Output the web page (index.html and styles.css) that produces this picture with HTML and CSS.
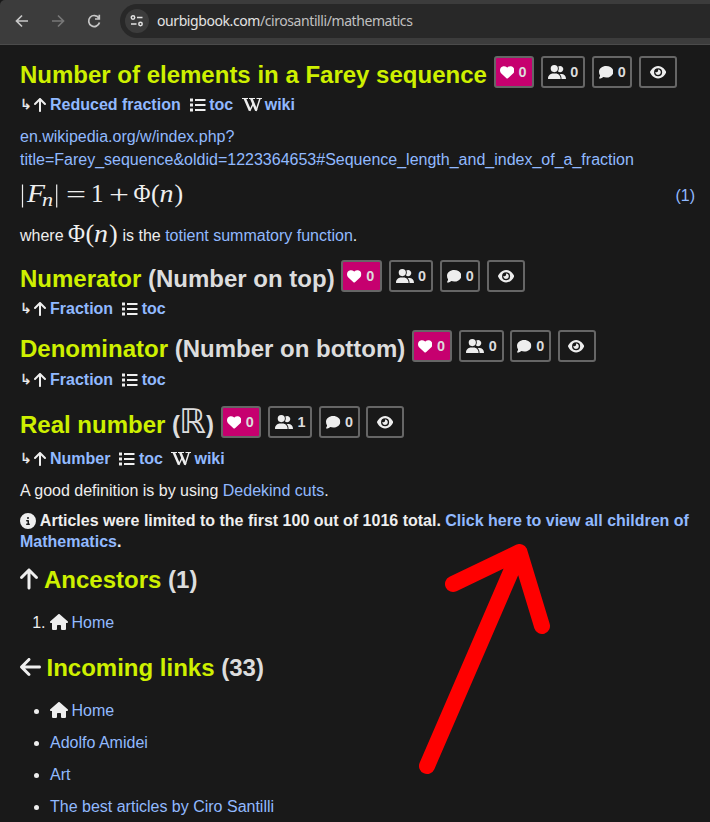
FILE: index.html
```html
<!DOCTYPE html>
<html lang="en">
<head>
<meta charset="utf-8">
<title>Mathematics</title>
<link rel="stylesheet" href="styles.css">
</head>
<body>
<svg class="defs" width="0" height="0">
  <symbol id="heart" viewBox="0 0 512 512"><path d="M47.6 300.4L228.3 469.1c7.5 7 17.4 10.9 27.7 10.9s20.2-3.9 27.7-10.9L464.4 300.4c30.4-28.3 47.6-68 47.6-109.5v-5.8c0-69.9-50.5-129.5-119.4-141C347 36.5 300.6 51.4 268 84L256 96 244 84c-32.6-32.6-79-47.5-124.6-39.9C50.5 55.6 0 115.2 0 185.1v5.8c0 41.5 17.2 81.2 47.6 109.5z"/></symbol>
  <symbol id="users" viewBox="0 0 640 512"><path d="M96 128a128 128 0 1 1 256 0A128 128 0 1 1 96 128zM0 482.3C0 383.8 79.8 304 178.3 304h91.4C368.2 304 448 383.8 448 482.3c0 16.4-13.3 29.7-29.7 29.7H29.7C13.3 512 0 498.7 0 482.3zM609.3 512H471.4c5.4-9.4 8.6-20.3 8.6-32v-8c0-60.7-27.1-115.2-69.8-151.8c2.4-.1 4.7-.2 7.1-.2h61.4C567.8 320 640 392.2 640 481.3c0 17-13.8 30.7-30.7 30.7zM432 256c-31 0-59-12.6-79.3-32.9C372.4 196.5 384 163.6 384 128c0-26.8-6.6-52.1-18.3-74.3C384.3 40.1 407.2 32 432 32c61.9 0 112 50.1 112 112s-50.1 112-112 112z"/></symbol>
  <symbol id="comment" viewBox="0 0 512 512"><path d="M512 240c0 114.9-114.6 208-256 208c-37.1 0-72.3-6.4-104.1-17.9c-11.9 8.7-31.3 20.6-54.3 30.6C73.6 471.1 44.7 480 16 480c-6.500 0-12.300-3.900-14.800-9.900c-2.500-6-1.100-12.800 3.400-17.400C20 435 34 408 38 374C14 337 0 290 0 240C0 125.100 114.600 32 256 32s256 93.100 256 208z"/></symbol>
  <symbol id="eye" viewBox="0 0 576 512"><path d="M288 32c-80.8 0-145.5 36.8-192.6 80.6C48.6 156 17.3 208 2.5 243.7c-3.3 7.9-3.3 16.7 0 24.6C17.3 304 48.6 356 95.4 399.4C142.5 443.2 207.2 480 288 480s145.5-36.8 192.6-80.6c46.8-43.5 78.1-95.4 93-131.1c3.3-7.9 3.3-16.7 0-24.6c-14.9-35.7-46.2-87.7-93-131.1C433.5 68.8 368.8 32 288 32zM144 256a144 144 0 1 1 288 0 144 144 0 1 1 -288 0zm144-64c0 35.3-28.7 64-64 64c-7.1 0-13.9-1.2-20.3-3.3c-5.5-1.8-11.9 1.600-11.700 7.400c.3 6.900 1.300 13.800 3.200 20.700c13.700 51.200 66.400 81.600 117.600 67.900s81.600-66.400 67.900-117.600c-11.100-41.500-47.800-69.400-88.600-71.100c-5.800-.2-9.200 6.100-7.400 11.700c2.100 6.400 3.300 13.200 3.300 20.300z"/></symbol>
  <symbol id="up" viewBox="0 0 384 512"><path d="M214.6 41.400c-12.500-12.500-32.800-12.500-45.300 0l-160 160c-12.500 12.500-12.500 32.800 0 45.300s32.800 12.500 45.300 0L160 141.200V448c0 17.700 14.300 32 32 32s32-14.300 32-32V141.200L329.400 246.600c12.500 12.500 32.800 12.500 45.300 0s12.500-32.800 0-45.300l-160-160z"/></symbol>
  <symbol id="left" viewBox="0 0 448 512"><path d="M9.4 233.4c-12.500 12.500-12.500 32.800 0 45.300l160 160c12.500 12.500 32.800 12.500 45.300 0s12.500-32.800 0-45.300L109.200 288 416 288c17.700 0 32-14.300 32-32s-14.300-32-32-32l-306.700 0L214.600 118.600c12.500-12.500 12.500-32.800 0-45.300s-32.800-12.500-45.300 0l-160 160z"/></symbol>
  <symbol id="house" viewBox="0 0 576 512"><path d="M575.8 255.5c0 18-15 32.100-32 32.100h-32l.7 160.200V472c0 22.100-17.900 40-40 40H392c-22.100 0-40-17.900-40-40V384c0-17.700-14.300-32-32-32H256c-17.700 0-32 14.300-32 32v88c0 22.100-17.900 40-40 40H104c-22.100 0-40-17.900-40-40V287.600H32c-18 0-32-14-32-32.100c0-9 3-17 10-24L266.400 8c7-7 15-8 22-8s15 2 21 7L564.800 231.500c8 7 12 15 11 24z"/></symbol>
  <symbol id="info" viewBox="0 0 512 512"><path d="M256 512A256 256 0 1 0 256 0a256 256 0 1 0 0 512zM216 336h24V272H216c-13.300 0-24-10.700-24-24s10.700-24 24-24h48c13.300 0 24 10.700 24 24v88h8c13.300 0 24 10.700 24 24s-10.700 24-24 24H216c-13.300 0-24-10.700-24-24s10.700-24 24-24zm40-208a32 32 0 1 1 0 64 32 32 0 1 1 0-64z"/></symbol>
  <symbol id="list" viewBox="0 0 16 16"><path d="M0 1.500h3v3H0zM0 6.500h3v3H0zM0 11.500h3v3H0zM5 2h10.500v2H5zM5 7h10.500v2H5zM5 12h10.500v2H5z"/></symbol>
  <symbol id="wiki" viewBox="0 0 20 16"><g fill="none" stroke="#eee"><path d="M0 1.500h6M7 1.500h6M14.500 1.500H20" stroke-width="1.200"/><path d="M2.800 1.500L8 13.500M9.300 1.500L14.300 13.500" stroke-width="2.500"/><path d="M7.700 14L11.500 6M14 14L18 1.500" stroke-width="1.500"/></g></symbol>
</svg>

<header class="toolbar">
  <svg class="nav" viewBox="0 0 16 16"><path d="M14 8H2.500M8 2.500L2.500 8L8 13.500"/></svg>
  <svg class="nav dim" viewBox="0 0 16 16"><path d="M2 8h11.500M8 2.500L13.500 8L8 13.500"/></svg>
  <svg class="nav" viewBox="0 0 16 16"><path d="M12.800 5A5.500 5.500 0 1 0 13.500 9.500M13.300 1.800V6H9"/></svg>
  <div class="omnibox">
    <span class="site"><svg viewBox="0 0 14 12"><circle cx="3" cy="2.500" r="1.700"/><path d="M7 2.500h5.500M1 9h5.500"/><circle cx="10.500" cy="9" r="1.700"/></svg></span>
    <span class="url">ourbigbook.com<span class="path">/cirosantilli/mathematics</span></span>
  </div>
</header>

<main>
  <div class="heading"><h2><a>Number of elements in a Farey sequence</a></h2>
    <div class="actions"><button class="like"><svg><use href="#heart"/></svg>0</button><button class="follow"><svg><use href="#users"/></svg>0</button><button class="talk"><svg><use href="#comment"/></svg>0</button><button class="watch"><svg><use href="#eye"/></svg></button></div></div>
  <div class="meta"><span class="corner">↳</span><svg class="up"><use href="#up"/></svg><a>Reduced fraction</a><svg class="list"><use href="#list"/></svg><a>toc</a><svg class="wiki"><use href="#wiki"/></svg><a>wiki</a></div>
  <p class="source"><a>en.wikipedia.org/w/index.php?<br>title=Farey_sequence&amp;oldid=1223364653#Sequence_length_and_index_of_a_fraction</a></p>
  <div class="equation">
    <svg class="math" width="180" height="38"><path d="M2.500 8.500v23M36.700 8.500v23"/><g font-style="italic"><text x="7" y="26" textLength="18" lengthAdjust="spacingAndGlyphs">F</text><text class="sub" x="22" y="30" textLength="11" lengthAdjust="spacingAndGlyphs">n</text><text x="139.500" y="26" textLength="14" lengthAdjust="spacingAndGlyphs">n</text></g><text x="46" y="27" textLength="20" lengthAdjust="spacingAndGlyphs">=</text><text x="71" y="26">1</text><text x="89" y="27" textLength="20" lengthAdjust="spacingAndGlyphs">+</text><text x="113.500" y="26" textLength="17" lengthAdjust="spacingAndGlyphs">Φ</text><text class="paren" x="131" y="26">(</text><text class="paren" x="154.500" y="26">)</text></svg>
    <a>(1)</a>
  </div>
  <p class="where">where <svg class="math phi" width="50" height="34"><text x="0" y="23" textLength="17" lengthAdjust="spacingAndGlyphs">Φ</text><text class="paren" x="17.500" y="23">(</text><text x="26" y="23" font-style="italic" textLength="14" lengthAdjust="spacingAndGlyphs">n</text><text class="paren" x="41" y="23">)</text></svg> is the <a>totient summatory function</a>.</p>

  <div class="heading numerator"><h2><a>Numerator</a> (Number on top)</h2>
    <div class="actions"><button class="like"><svg><use href="#heart"/></svg>0</button><button class="follow"><svg><use href="#users"/></svg>0</button><button class="talk"><svg><use href="#comment"/></svg>0</button><button class="watch"><svg><use href="#eye"/></svg></button></div></div>
  <div class="meta"><span class="corner">↳</span><svg class="up"><use href="#up"/></svg><a>Fraction</a><svg class="list"><use href="#list"/></svg><a>toc</a></div>

  <div class="heading denominator"><h2><a>Denominator</a> (Number on bottom)</h2>
    <div class="actions"><button class="like"><svg><use href="#heart"/></svg>0</button><button class="follow"><svg><use href="#users"/></svg>0</button><button class="talk"><svg><use href="#comment"/></svg>0</button><button class="watch"><svg><use href="#eye"/></svg></button></div></div>
  <div class="meta low"><span class="corner">↳</span><svg class="up"><use href="#up"/></svg><a>Fraction</a><svg class="list"><use href="#list"/></svg><a>toc</a></div>

  <div class="heading real"><h2><a>Real number</a> (<svg class="reals" width="26" height="38"><text x="-1" y="27" textLength="27" lengthAdjust="spacingAndGlyphs">ℝ</text></svg>)</h2>
    <div class="actions"><button class="like"><svg><use href="#heart"/></svg>0</button><button class="follow"><svg><use href="#users"/></svg>1</button><button class="talk"><svg><use href="#comment"/></svg>0</button><button class="watch"><svg><use href="#eye"/></svg></button></div></div>
  <div class="meta lower"><span class="corner">↳</span><svg class="up"><use href="#up"/></svg><a>Number</a><svg class="list"><use href="#list"/></svg><a>toc</a><svg class="wiki"><use href="#wiki"/></svg><a>wiki</a></div>
  <p class="text">A good definition is by using <a>Dedekind cuts</a>.</p>
  <p class="notice"><svg class="info"><use href="#info"/></svg> Articles were limited to the first 100 out of 1016 total. <a>Click here to view all children of<br>Mathematics</a>.</p>

  <div class="heading section"><h2><svg class="big-up"><use href="#up"/></svg><a>Ancestors</a> (1)</h2></div>
  <ol><li><svg class="house"><use href="#house"/></svg><a>Home</a></li></ol>
  <div class="heading incoming"><h2><svg class="big-left"><use href="#left"/></svg><a>Incoming links</a> (33)</h2></div>
  <ul>
    <li><svg class="house"><use href="#house"/></svg><a>Home</a></li>
    <li><a>Adolfo Amidei</a></li>
    <li><a>Art</a></li>
    <li><a>The best articles by Ciro Santilli</a></li>
  </ul>
</main>
<svg class="pointer" width="120" height="240" viewBox="440 540 120 240"><path d="M427 766L519.500 552M453 584L519.500 552L542 626"/></svg>
</body>
</html>
```
FILE: styles.css
```css
* { box-sizing: border-box; }
html { background: #191919; }
body {
  margin: 0;
  height: 822px;
  overflow: hidden;
  position: relative;
  background: #191919;
  color: #eee;
  font: 16px/21px "Liberation Sans", Arial, sans-serif;
}
.defs { position: absolute; }
svg { fill: #eee; }
a { color: #91b9ff; }

.toolbar {
  display: flex;
  align-items: center;
  height: 45px;
  padding: 0 0 3px 14px;
  background: #3c3c3c;
  border-bottom: 1px solid #4b4b4b;
  border-top-left-radius: 5px;
}
.nav { width: 16px; height: 16px; margin-right: 20px; fill: none; stroke: #c7c7c7; stroke-width: 1.7; }
.dim { stroke: #777; }
.omnibox {
  display: flex;
  align-items: center;
  flex: 1;
  height: 34px;
  margin-left: -2px;
  padding-left: 5px;
  background: #282828;
  border-radius: 17px 0 0 17px;
}
.site { display: flex; align-items: center; justify-content: center; width: 24px; height: 24px; border-radius: 12px; background: #3c3c3c; }
.site svg { width: 14px; height: 12px; fill: none; stroke: #e3e3e3; stroke-width: 1.5; }
.url { margin-left: 8px; color: #e3e3e3; font: 14px/20px "Noto Sans", sans-serif; letter-spacing: -.42px; white-space: nowrap; }
.path { color: #c0c0c0; }

main { padding: 11px 15px 0 20px; white-space: nowrap; }
p { margin: 0; }
.heading { display: flex; height: 38px; }
h2 { margin: 0; color: #ddd; font-size: 24px; line-height: 38px; font-weight: bold; }
h2 a { color: #cef000; }
.actions { display: flex; gap: 6.800px; margin-left: 6.700px; }
button {
  display: flex;
  align-items: center;
  height: 32px;
  padding: 0 0 0 4px;
  border: 2px solid #666;
  border-radius: 3px;
  background: transparent;
  color: #ddd;
  font: bold 14.400px/18px "Liberation Sans", Arial, sans-serif;
}
button svg { width: 14.400px; height: 14.400px; margin-right: 4.500px; }
.like { width: 40.400px; background: #c6006f; }
.like svg { fill: #fff; }
.follow { width: 44.400px; padding-left: 5px; }
.follow svg { width: 18px; }
.talk { width: 40.400px; padding-left: 5px; }
.watch { width: 38px; justify-content: center; padding: 0; }
.watch svg { width: 16.200px; margin: 0; }

.meta { display: flex; align-items: center; height: 21px; font-weight: bold; }
.corner { width: 14px; font: 14px/21px "DejaVu Sans", sans-serif; -webkit-text-stroke: .3px #eee; }
.up { width: 12px; height: 16px; margin-right: 4px; }
.list { width: 16px; height: 16px; margin: 0 3.500px 0 9px; }
.wiki { width: 20px; height: 16px; margin: 0 3px 0 8.500px; }

.source { margin-top: 10px; line-height: 23px; }
.equation { display: flex; align-items: center; justify-content: space-between; height: 38px; margin-top: 5px; }
.math { font: 25px "Liberation Serif", serif; }
.math path { stroke: #eee; stroke-width: 1.200; }
.math .sub { font-size: 18px; }
.math .paren { font-size: 26px; }
.where { display: flex; align-items: center; height: 25px; margin-top: 9px; white-space: pre; }
.phi { flex: none; }
.numerator { margin-top: 12px; }
.denominator { margin-top: 11px; }
.low { margin-top: 1px; }
.real { margin-top: 16px; }
.lower { margin-top: 4px; }
.reals { vertical-align: top; overflow: visible; font: 34px "DejaVu Sans", sans-serif; fill: #ddd; }
.text { margin-top: 11px; }
.notice { margin-top: 9px; font-weight: bold; }
.info { width: 16px; height: 16px; vertical-align: -3px; }
.section { margin-top: 9px; }
.big-up { width: 18px; height: 24px; margin-right: 6px; vertical-align: -3px; }
.big-left { width: 21px; height: 24px; margin-right: 5.500px; vertical-align: -3px; }
ol, ul { margin: 13px 0 0; padding-left: 30px; }
li { height: 21px; }
li + li { margin-top: 11px; }
.house { width: 18px; height: 16px; margin-right: 3.500px; vertical-align: -2px; }
.incoming { margin-top: 16px; }

.pointer { position: absolute; left: 440px; top: 540px; overflow: visible; fill: none; stroke: #f00; stroke-width: 16; stroke-linecap: round; stroke-linejoin: round; }
```
